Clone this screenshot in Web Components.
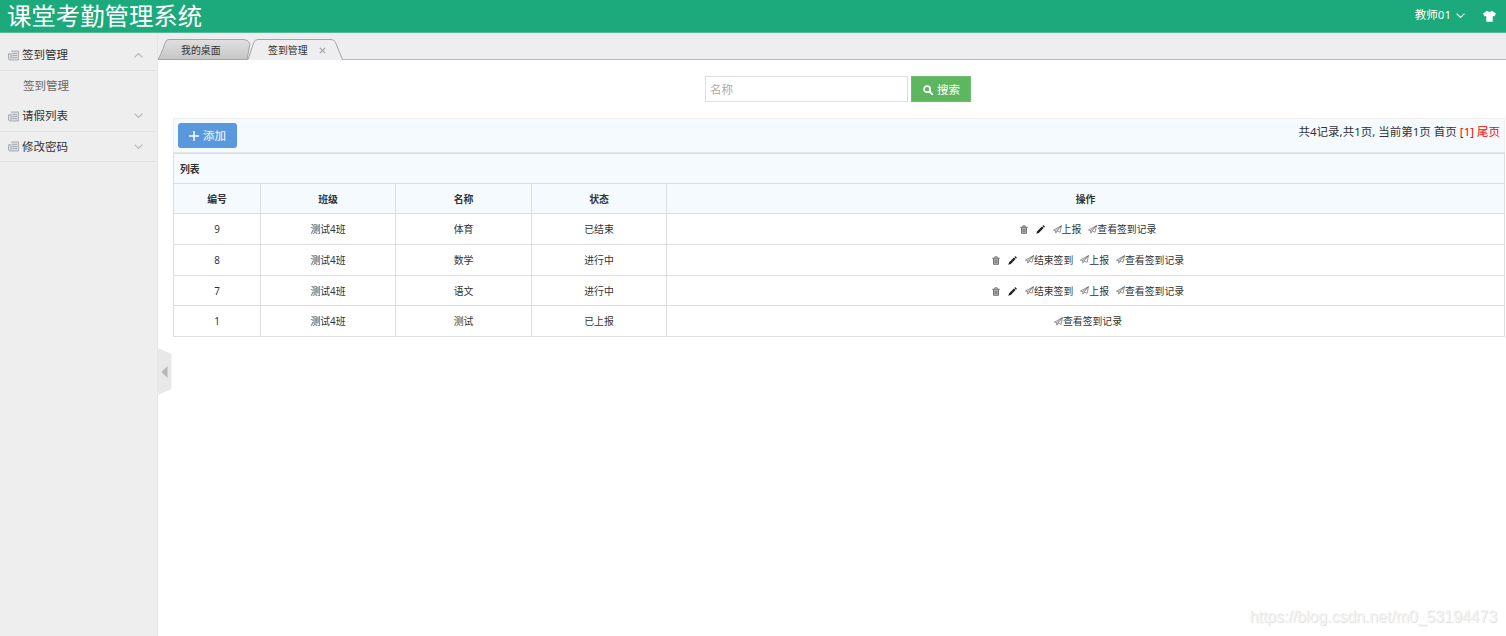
<!DOCTYPE html>
<html lang="zh-CN">
<head>
<meta charset="UTF-8">
<title>课堂考勤管理系统</title>
<style>
  html, body { height: 100%; }
  body {
    margin: 0;
    overflow: hidden;
    background: #fff;
    color: #333;
    font: 11.5px/1.5 "Noto Sans", "Noto Sans CJK SC", sans-serif;
  }
</style>
</head>
<body>
<admin-app></admin-app>

<script>
const ICONS = {
  news: '<path d="M4.500 1.500h11v13H2L.8 13V5.500h3.700z" fill="#dcdee2"/><path d="M4.500 1.500h11v13H2L.8 13V5.500h3.700V13" fill="none" stroke="currentColor" stroke-width="1.200"/><path d="M6.500 5h7M6.500 8h7M6.500 11h7" fill="none" stroke="currentColor" stroke-width="1.200"/>',
  down: '<path d="M1 4.500 8 11.500l7-7" fill="none" stroke="currentColor" stroke-width="2"/>',
  up: '<path d="M1 11.500 8 4.500l7 7" fill="none" stroke="currentColor" stroke-width="2"/>',
  shirt: '<path d="M5 1Q8 4 11 1l5 3.500-2 4-2-1V15.500H4V7.500l-2 1-2-4z" fill="currentColor"/>',
  search: '<circle cx="6.600" cy="6.600" r="4.900" fill="none" stroke="currentColor" stroke-width="2.700"/><path d="m10.300 10.300 4.200 4.200" stroke="currentColor" stroke-width="3" stroke-linecap="round"/>',
  plus: '<path d="M8 0v16M0 8h16" stroke="currentColor" stroke-width="2.400"/>',
  close: '<path d="m2 2 12 12M14 2 2 14" stroke="currentColor" stroke-width="3"/>',
  trash: '<path d="M3 4v11h10V4z" fill="#bbb"/><path d="M.5 4h15M5.500 3.500V1.500h5v2M3 4.500v10.200h10V4.500M6.300 6.500v6M9.700 6.500v6" fill="none" stroke="currentColor" stroke-width="1.700"/>',
  pencil: '<path d="M.5 15.500 2 11 10.500 2.500l3 3L5 14zM11.300 1.700l1-1q.8-.6 1.500 0l1.500 1.500q.6.800 0 1.500l-1 1z" fill="currentColor"/>',
  plane: '<path d="M.8 9 15 1.200 12.600 13 7.300 10.600 5 14.500 4.700 10zM4.700 10 15 1.200 7.300 10.600" fill="none" stroke="currentColor" stroke-width="1.200" stroke-linejoin="round"/>'
};

// Shared helper: attaches an open shadow root with the given markup
class BaseElement extends HTMLElement {
  connectedCallback() {
    if (!this.shadowRoot) {
      this.attachShadow({ mode: 'open' });
    }
    this.shadowRoot.innerHTML = this.template();
  }
}

class UiIcon extends BaseElement {
  template() {
    return `
      <style>
        :host { display: inline-block; flex: none; width: 10px; height: 10px; }
        svg { display: block; width: 100%; height: 100%; }
      </style>
      <svg viewBox="0 0 16 16" preserveAspectRatio="none">${ICONS[this.getAttribute('name')]}</svg>
    `;
  }
}

class AppHeader extends BaseElement {
  template() {
    return `
      <style>
        :host {
          display: flex;
          align-items: center;
          justify-content: space-between;
          box-sizing: border-box;
          height: 33px;
          padding: 0 10px 1px 7px;
          background: #1ca97c;
          border-bottom: 1px solid #57b998;
          color: #fff;
        }
        .logo { font-size: 24.400px; line-height: 32px; white-space: nowrap; }
        .user { display: flex; align-items: center; line-height: 28px; height: 30px; padding-bottom: 2px; }
        .arrow { width: 9px; height: 9px; margin: 2px 18px 0 5px; }
        .skin { width: 13px; height: 12px; margin-top: 3px; }
      </style>
      <div class="logo"><slot></slot></div>
      <div class="user">
        <span>${this.getAttribute('user')}</span>
        <ui-icon class="arrow" name="down"></ui-icon>
        <ui-icon class="skin" name="shirt"></ui-icon>
      </div>
    `;
  }
}

class MenuGroup extends BaseElement {
  template() {
    const open = this.hasAttribute('open');
    return `
      <style>
        :host { display: block; }
        .title {
          display: flex;
          align-items: center;
          box-sizing: border-box;
          height: ${open ? 31 : 30.500}px;
          padding: 0 14px 0 8px;
          border-bottom: 1px solid #e2e2e2;
        }
        .book { width: 11px; height: 11px; color: #9ba0a8; margin: 1px 3px 0 0; }
        .name { flex: 1; }
        .arrow { width: 9px; height: 9px; color: #b5b5b5; }
        ::slotted(*) { display: block; padding-left: 23px; line-height: 30px; color: #666; }
      </style>
      <div class="title">
        <ui-icon class="book" name="news"></ui-icon>
        <span class="name">${this.getAttribute('name')}</span>
        <ui-icon class="arrow" name="${open ? 'up' : 'down'}"></ui-icon>
      </div>
      <slot></slot>
    `;
  }
}

class SideMenu extends BaseElement {
  template() {
    return `
      <style>
        :host {
          display: block;
          position: relative;
          box-sizing: border-box;
          width: 158px;
          padding-top: 7px;
          background: #eee;
          border-right: 1px solid #e6e6e6;
        }
        /* collapse handle hangs over the content area */
        .handle { position: absolute; left: 157px; top: 314px; width: 15px; height: 49px; }
      </style>
      <slot></slot>
      <svg class="handle" viewBox="0 0 15 49">
        <path d="M0 .5 14.500 7v35L0 48.500z" fill="#e8e8e8"/>
        <path d="M10.500 19v12L4.500 25z" fill="#b5b5b5"/>
      </svg>
    `;
  }
}

class TabBar extends BaseElement {
  template() {
    return `
      <style>
        :host {
          display: flex;
          position: relative;
          box-sizing: border-box;
          height: 27px;
          padding-top: 6px;
          background: #eeeef0;
          border-bottom: 1px solid #b8b8b8;
        }
      </style>
      <slot></slot>
    `;
  }
}

class TabItem extends BaseElement {
  template() {
    const active = this.hasAttribute('active');
    const fill = active ? '#eeeef0' : 'url(#g)';
    return `
      <style>
        :host {
          display: flex;
          position: relative;
          box-sizing: border-box;
          width: ${active ? 97 : 93}px;
          height: 21px;
          margin-left: ${active ? '-5px' : '0'};
          padding: 1px 0 0 ${active ? 22 : 23}px;
          align-items: center;
          font-size: 9.900px;
          line-height: 20px;
        }
        .shape { position: absolute; left: 0; top: 0; width: 100%; height: 21px; }
        .label { position: relative; }
        .close { position: relative; width: 7px; height: 7px; margin-left: 11px; color: #a5a5a5; }
      </style>
      <svg class="shape" viewBox="0 0 ${active ? 97 : 93} 21">
        <defs>
          <linearGradient id="g" x2="0" y2="1">
            <stop offset="0" stop-color="#e0e0e0"/>
            <stop offset="1" stop-color="#c6c6c6"/>
          </linearGradient>
        </defs>
        ${active
          ? `<path d="M2 21 8 3Q9 .5 12 .5H85Q88 .5 89.500 3.500L96.500 21z" fill="${fill}"/>
             <path d="M2 20.500 8 3Q9 .5 12 .5H85Q88 .5 89.500 3.500L96.500 20.500" fill="none" stroke="#a5a5a5"/>`
          : `<path d="M0 20.500Q2.500 17 7 4 8 .5 11 .5H86Q90 .5 92 5L89 20.500z" fill="${fill}" stroke="#a5a5a5"/>`}
      </svg>
      <span class="label"><slot></slot></span>
      ${active ? '<ui-icon class="close" name="close"></ui-icon>' : ''}
    `;
  }
}

class SearchForm extends BaseElement {
  template() {
    return `
      <style>
        :host { display: flex; justify-content: center; gap: 3px; height: 26px; padding-right: 2px; }
        input {
          box-sizing: border-box;
          width: 203px;
          height: 26px;
          padding: 0 4px;
          border: 1px solid #ddd;
          font: inherit;
          outline: none;
        }
        input::placeholder { color: #aaa; opacity: 1; }
        button {
          display: flex;
          align-items: center;
          justify-content: center;
          gap: 4px;
          width: 60px;
          padding: 1px 0 0 1px;
          border: 1px solid #6dbf6d;
          background: #5eb75e;
          color: #fff;
          font: inherit;
        }
        ui-icon { margin-top: 1px; }
      </style>
      <input type="text" placeholder="${this.getAttribute('placeholder')}">
      <button><ui-icon name="search"></ui-icon><span><slot></slot></span></button>
    `;
  }
}

class ListToolbar extends BaseElement {
  template() {
    return `
      <style>
        :host {
          display: flex;
          justify-content: space-between;
          box-sizing: border-box;
          height: 35px;
          padding: 4px 4px 0;
          background: #f5fafe;
          border: 1px solid #eee;
          border-bottom-color: #e4e4e4;
        }
        button {
          display: flex;
          align-items: center;
          justify-content: center;
          gap: 4px;
          width: 59px;
          height: 25px;
          padding: 0;
          border: 0;
          border-radius: 3px;
          background: #5a98de;
          color: #fff;
          font: inherit;
        }
        ui-icon { margin-top: 1px; }
        .pager { line-height: 18px; white-space: nowrap; }
        .pager b { font-weight: normal; color: red; }
      </style>
      <button><ui-icon name="plus"></ui-icon><span><slot></slot></span></button>
      <div class="pager">共4记录,共1页, 当前第1页 首页 <b>[1] 尾页</b></div>
    `;
  }
}

class SignTable extends BaseElement {
  get rows() {
    return [
      ['9', '测试4班', '体育', '已结束', ['trash', 'pencil', '上报', '查看签到记录']],
      ['8', '测试4班', '数学', '进行中', ['trash', 'pencil', '结束签到', '上报', '查看签到记录']],
      ['7', '测试4班', '语文', '进行中', ['trash', 'pencil', '结束签到', '上报', '查看签到记录']],
      ['1', '测试4班', '测试', '已上报', ['查看签到记录']]
    ];
  }

  action(name) {
    if (ICONS[name]) {
      return `<a><ui-icon class="${name}" name="${name}"></ui-icon></a>`;
    }
    return `<a><ui-icon class="plane" name="plane"></ui-icon>${name}</a>`;
  }

  template() {
    const head = ['编号', '班级', '名称', '状态', '操作'];
    return `
      <style>
        :host {
          display: block;
          border: solid #ddd;
          border-width: 0 1px 1px 0;
          font-size: 9.850px;
        }
        .row { display: grid; grid-template-columns: 87px 135px 136px 135px 1fr; height: 30.750px; }
        .head { height: 30px; background: #f5fafe; font-weight: bold; color: #333; }
        .caption { grid-template-columns: 1fr; }
        .cell {
          display: flex;
          align-items: center;
          justify-content: center;
          border: solid #ddd;
          border-width: 1px 0 0 1px;
          padding-top: .5px;
          line-height: 16px;
        }
        .head .cell { padding-top: 0; }
        .caption .cell { justify-content: flex-start; padding-left: 6px; }
        .ops { gap: 7px; padding-left: 5px; }
        a { display: flex; align-items: center; }
        .plane { width: 9px; height: 9px; color: #666; }
        .trash { width: 8px; height: 9px; margin: 1px 1px 0 0; color: #666; }
        .pencil { width: 9px; height: 9px; margin: 1px 1px 0 0; color: #222; }
      </style>
      <div class="row head caption"><div class="cell">列表</div></div>
      <div class="row head">${head.map(t => `<div class="cell">${t}</div>`).join('')}</div>
      ${this.rows.map(r => `
        <div class="row">
          ${r.slice(0, 4).map(t => `<div class="cell">${t}</div>`).join('')}
          <div class="cell ops">${r[4].map(n => this.action(n)).join('')}</div>
        </div>`).join('')}
    `;
  }
}

class AdminApp extends BaseElement {
  template() {
    return `
      <style>
        :host { display: flex; flex-direction: column; height: 100vh; position: relative; }
        .body { display: flex; flex: 1; min-height: 0; }
        side-menu { flex: none; }
        main { flex: 1; min-width: 0; }
        .page { padding: 16px 1px 0 15px; }
        list-toolbar { margin-top: 16px; }
        .watermark {
          position: absolute;
          right: 9px;
          bottom: 9px;
          font: 15.850px/20px "Liberation Sans", sans-serif;
          color: #f4f4f4;
          text-shadow: 1px 1px 1px #ddd;
        }
      </style>
      <app-header user="教师01">课堂考勤管理系统</app-header>
      <div class="body">
        <side-menu>
          <menu-group name="签到管理" open><span>签到管理</span></menu-group>
          <menu-group name="请假列表"></menu-group>
          <menu-group name="修改密码"></menu-group>
        </side-menu>
        <main>
          <tab-bar>
            <tab-item>我的桌面</tab-item>
            <tab-item active>签到管理</tab-item>
          </tab-bar>
          <div class="page">
            <search-form placeholder="名称">搜索</search-form>
            <list-toolbar>添加</list-toolbar>
            <sign-table></sign-table>
          </div>
        </main>
      </div>
      <div class="watermark">https://blog.csdn.net/m0_53194473</div>
    `;
  }
}

customElements.define('ui-icon', UiIcon);
customElements.define('app-header', AppHeader);
customElements.define('menu-group', MenuGroup);
customElements.define('side-menu', SideMenu);
customElements.define('tab-bar', TabBar);
customElements.define('tab-item', TabItem);
customElements.define('search-form', SearchForm);
customElements.define('list-toolbar', ListToolbar);
customElements.define('sign-table', SignTable);
customElements.define('admin-app', AdminApp);
</script>
</body>
</html>
